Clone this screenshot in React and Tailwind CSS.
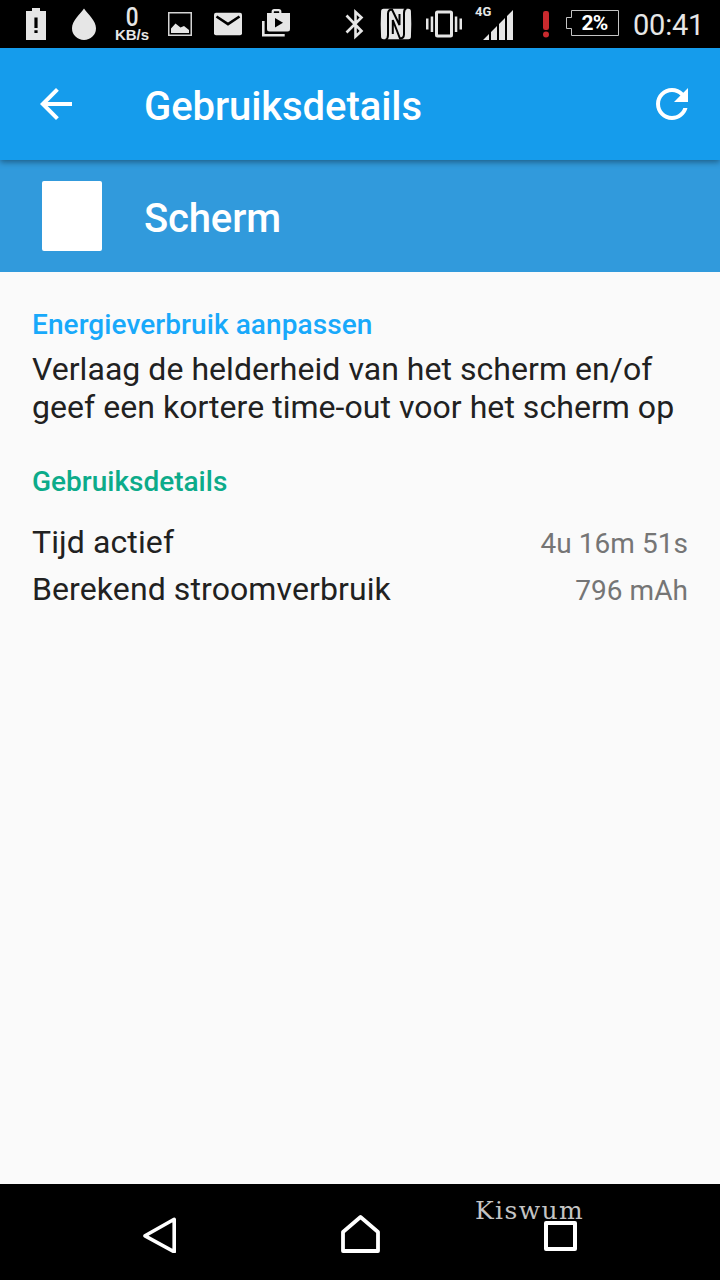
import React from "react";

const StatusIcon = ({ children, width = 48, className = "" }) => (
  <svg
    width={width}
    height="48"
    viewBox={`0 0 ${width} 48`}
    fill="#e6e6e6"
    className={`shrink-0 ${className}`}
  >
    {children}
  </svg>
);

const Notifications = () => (
  <div className="flex pl-3">
    {/* low battery */}
    <StatusIcon>
      <path
        fillRule="evenodd"
        d="M20 8h8v3h6v29H14V11h6zM22.4 17.5h3.2v10.5h-3.2zM22.4 30.3h3.2v2.7h-3.2z"
      />
    </StatusIcon>
    {/* drop */}
    <StatusIcon>
      <path d="M24 8.5C20 14 12 21 12 28.2a12 11.8 0 0 0 24 0C36 21 28 14 24 8.5z" />
    </StatusIcon>
    <div className="w-12 h-12 pt-[8px] flex flex-col items-center text-[#e6e6e6]">
      <p className="text-[25px] leading-[20px] font-medium scale-x-90">0</p>
      <p className="text-[15px] leading-[14px] font-['Liberation_Sans',sans-serif] font-bold whitespace-nowrap">
        KB/s
      </p>
    </div>
    {/* picture */}
    <StatusIcon>
      <rect x="12.75" y="12.75" width="22.5" height="22.5" fill="none" stroke="#d4d4d4" strokeWidth="1.5" />
      <path d="M15 33v-4.5l4.5-5 5 4 3.5-1.5 5 4v3z" />
    </StatusIcon>
    {/* mail */}
    <StatusIcon>
      <path d="M12 12.8h24q2 0 2 2v18.4q0 2-2 2H12q-2 0-2-2V14.8q0-2 2-2z" />
      <path d="M12.5 16.5 24 24.2l11.5-7.7" fill="none" stroke="#000" strokeWidth="2.6" />
    </StatusIcon>
    {/* play store */}
    <StatusIcon>
      <path d="M11.3 21v14.3h21.4" fill="none" stroke="#e6e6e6" strokeWidth="2.6" />
      <path d="M20.7 14v-2.3q0-1.5 1.5-1.5h4.6q1.5 0 1.5 1.5V14" fill="none" stroke="#e6e6e6" strokeWidth="2.2" />
      <path
        fillRule="evenodd"
        d="M15 13h23v16q0 2.5-2.5 2.5h-18Q15 31.5 15 29zM23 18v9.5l8-4.7z"
      />
    </StatusIcon>
  </div>
);

const SystemIcons = () => (
  <div className="flex pr-[18px]">
    {/* bluetooth */}
    <StatusIcon width={20} className="mr-[15px]">
      <path
        d="M1.5 15.5 16.5 31 10.5 36.5V12l6 5.5L1.5 32.5"
        fill="none"
        stroke="#e6e6e6"
        strokeWidth="2.6"
      />
    </StatusIcon>
    {/* nfc */}
    <StatusIcon width={32} className="mr-[14px]">
      <path d="M3.5 8.7h25q2.2 0 2.4 2 .8 13.3 0 26.6-.2 2-2.4 2h-25q-2.2 0-2.4-2-.8-13.3 0-26.6.2-2 2.4-2z" />
      <path
        d="M5.5 40Q8 39 8 35V13.5Q8.200 9.500 12 9.500L19.500 25V14M26.500 8Q24 9 24 13v21.500Q23.800 38.500 20 38.500L12.800 20v14"
        fill="none"
        stroke="#000"
        strokeWidth="2"
      />
    </StatusIcon>
    {/* vibrate */}
    <StatusIcon width={36} className="mr-[13px]">
      <rect x="10.5" y="12" width="15" height="24" rx="1" fill="none" stroke="#e6e6e6" strokeWidth="3" />
      <path d="M0 18.5h2.5v11H0zM4.7 16.5h2.5v15.5H4.7zM28.8 16.5h2.5v15.5h-2.5zM33.5 18.5H36v11h-2.5z" />
    </StatusIcon>
    {/* signal strength */}
    <div className="relative w-[38px] h-12 mr-[30px]">
      <span className="absolute left-0 top-[5px] text-[13px] leading-[14px] font-bold text-[#e6e6e6]">
        4G
      </span>
      <StatusIcon width={38}>
        <path d="M8 40l6-6v6zM16 32 22 26v14h-6zM24 24l6-6v22h-6zM32 16 38 10v30h-6z" />
      </StatusIcon>
    </div>
    {/* warning */}
    <StatusIcon width={6} className="mr-[17px]">
      <rect x="0" y="11" width="6" height="19" rx="2.2" fill="#c92a2e" />
      <circle cx="3" cy="34.5" r="3" fill="#c92a2e" />
    </StatusIcon>
    <div className="relative w-[54px] h-12 mr-[13px]">
      <StatusIcon width={54}>
        <path
          d="M5.5 10.5h47v25h-47v-7h-5v-11h5z"
          fill="none"
          stroke="#c4c4c4"
          strokeWidth="1"
        />
      </StatusIcon>
      <span className="absolute left-[3px] right-0 top-[11px] text-center text-[21px] leading-[24px] font-bold text-white tracking-[-0.7px]">
        2%
      </span>
    </div>
    <span className="text-[29px] leading-[50px] text-[#e6e6e6] w-[69px] whitespace-nowrap tracking-[-0.2px]">
      00:41
    </span>
  </div>
);

const UsageRow = ({ label, value }) => (
  <div className="flex justify-between items-center h-[47px]">
    <span className="text-[32px] leading-[38px] pb-[2px] text-[#212121] tracking-[0.1px]">
      {label}
    </span>
    <span className="text-[28px] leading-[34px] text-[#757575] pt-[2px] tracking-[0.06px]">
      {value}
    </span>
  </div>
);

const usage = [
  { label: "Tijd actief", value: "4u 16m 51s" },
  { label: "Berekend stroomverbruik", value: "796 mAh" },
];

const App = () => {
  return (
    <div className="w-[720px] h-[1280px] flex flex-col overflow-hidden bg-[#fafafa] font-['Roboto',sans-serif]">
      <div className="h-12 shrink-0 flex justify-between bg-black">
        <Notifications />
        <SystemIcons />
      </div>

      <header className="relative z-10 h-28 shrink-0 flex items-center pl-8 pr-6 bg-[#159cec] text-white shadow-[0_2px_6px_rgba(0,0,0,0.4)]">
        <svg width="48" height="48" viewBox="0 0 24 24" fill="currentColor">
          <path d="M20 11H7.83l5.59-5.59L12 4l-8 8 8 8 1.41-1.41L7.83 13H20v-2z" />
        </svg>
        <h1 className="flex-1 ml-16 pt-1.5 text-[40px] leading-[48px] font-medium tracking-[-0.07px]">
          Gebruiksdetails
        </h1>
        <svg width="48" height="48" viewBox="0 0 24 24" fill="currentColor">
          <path d="M17.65 6.35C16.2 4.9 14.21 4 12 4c-4.42 0-7.99 3.58-7.99 8s3.57 8 7.99 8c3.73 0 6.84-2.55 7.73-6h-2.08c-.82 2.33-3.04 4-5.65 4-3.31 0-6-2.69-6-6s2.69-6 6-6c1.66 0 3.14.69 4.22 1.78L13 11h7V4l-2.35 2.35z" />
        </svg>
      </header>

      <div className="h-28 shrink-0 flex items-center pl-[42px] bg-[#319adc] text-white">
        <div className="w-[60px] h-[70px] rounded-[2px] bg-white" />
        <h2 className="ml-[42px] pt-1.5 text-[40px] leading-[48px] font-medium tracking-[-0.15px]">
          Scherm
        </h2>
      </div>

      <main className="flex-1 px-8 pt-9">
        <h3 className="text-[28px] leading-[34px] font-medium text-[#18a9fa] tracking-[0.08px]">
          Energieverbruik aanpassen
        </h3>
        <p className="mt-2 text-[32px] leading-[38px] text-[#212121] tracking-[0.04px]">
          Verlaag de helderheid van het scherm en/of
          <br />
          geef een kortere time-out voor het scherm op
        </p>
        <h3 className="mt-[39px] mb-5 text-[28px] leading-[34px] font-medium text-[#0cab8a]">
          Gebruiksdetails
        </h3>
        {usage.map((item) => (
          <UsageRow key={item.label} label={item.label} value={item.value} />
        ))}
      </main>

      <nav className="relative h-24 shrink-0 flex items-center bg-black">
        <svg width="34" height="40" viewBox="0 0 34 40" className="ml-[143px] mt-px" fill="none" stroke="#fff" strokeWidth="3.6" strokeLinejoin="round">
          <path d="M31.2 6.3v32.5L2 22.8z" />
        </svg>
        <svg width="40" height="42" viewBox="0 0 40 42" className="ml-[163px]" fill="none" stroke="#fff" strokeWidth="3.8" strokeLinejoin="round">
          <path d="M3 21 20.5 6 38 21v19H3z" />
        </svg>
        <div className="ml-[164px] mt-[7px] w-[33px] h-[30px] border-4 border-white rounded-[2px]" />
        <span className="absolute left-[475px] top-[10px] font-['DejaVu_Serif',serif] text-[25px] leading-[34px] tracking-[1.4px] text-[#c4c4c4]">
          Kiswum
        </span>
      </nav>
    </div>
  );
};

export default App;
